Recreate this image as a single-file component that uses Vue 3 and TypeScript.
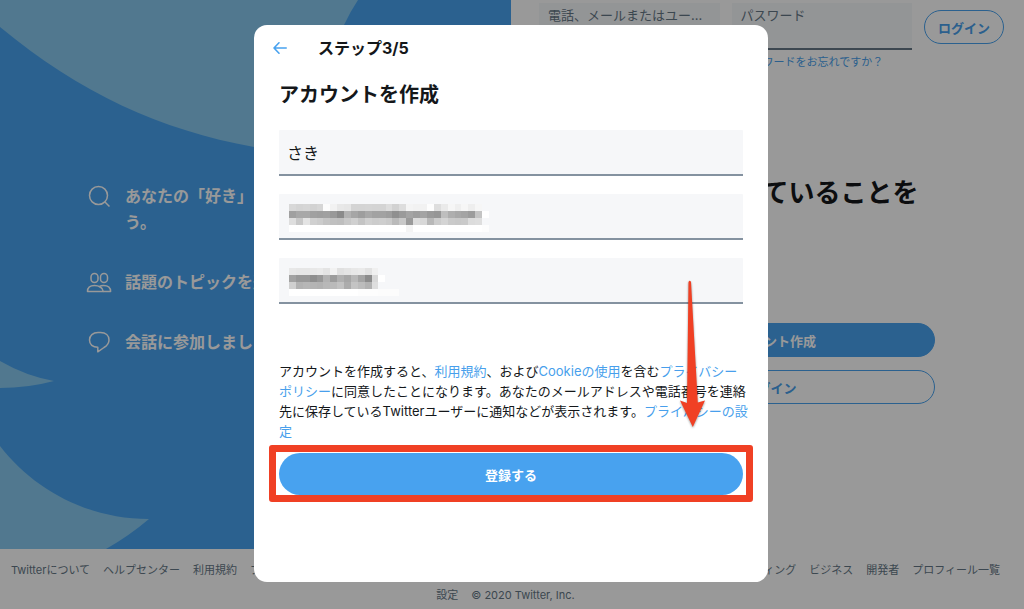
<script setup lang="ts">
import { ref } from 'vue'

interface Feature {
  icon: 'search' | 'people' | 'reply'
  text: string
}

const features: Feature[] = [
  { icon: 'search', text: 'あなたの「好き」をフォローしましょう。' },
  { icon: 'people', text: '話題のトピックを追いかけましょう。' },
  { icon: 'reply', text: '会話に参加しましょう。' },
]

const footerLinks: string[] = [
  'Twitterについて',
  'ヘルプセンター',
  '利用規約',
  'プライバシーポリシー',
  'Cookie',
  '広告情報',
  'ブログ',
  'ステータス',
  '求人',
  'ブランド',
  '広告',
  'マーケティング',
  'ビジネス',
  '開発者',
  'プロフィール一覧',
  '設定',
]

// Two hex digits per cell: the grey level of each mosaic block.
const emailMask: string[] = [
  'd8d4d6d2d6fcf2e8e6d4d4d5d4d4ddd2ddf4f2f2fddeeaf6eff6eef6',
  'a0a8a8a09ea0988ab2a69ea8a2a29e909aa49ea49a96beaea8a49cc4ff',
  'dec8e4d0ccc4c0bec8d0c4d0cccecabac89adcd8b8ccd4cac8cadcde',
  'fffffffffffffffffffffffffffffffffff4fffffffffffffffffffffd',
]
const phoneMask: string[] = [
  'e8e6e6e8eae4f2e0e4e8eae2f0',
  'a298988e98b29cb0a6b8a48cd8ff',
  'd0b2b6b4b2b8bac2acc4bcb2de',
  'fffffffffffffffffffffdfdfdfcfcfc',
]

interface Cell {
  x: number
  y: number
  fill: string
}

function toCells(rows: string[]): Cell[] {
  return rows.flatMap((row, y) =>
    (row.match(/../g) ?? []).map((v, x) => ({ x, y, fill: `#${v}${v}${v}` })),
  )
}

const emailCells = toCells(emailMask)
const phoneCells = toCells(phoneMask)

const name = ref('さき')
const email = ref('')
const phone = ref('')
const loginUser = ref('')
const loginPassword = ref('')
</script>

<template>
  <div class="page">
    <div class="columns">
      <section class="intro">
        <svg class="bird" width="511" height="549" viewBox="0 0 511 549" aria-hidden="true">
          <path d="M0 0H358Q350 12 344 25Q305 90 300 153Q276 151 254 147C160 130 80 93 0 27Z" />
          <path d="M0 361Q26 376 54 381Q28 388 0 388Z" />
          <path d="M0 446C34 490 88 519 149 519Q129 536 106 549H0Z" />
        </svg>
        <ul class="features">
          <li v-for="f in features" :key="f.icon">
            <svg v-if="f.icon === 'search'" width="26" height="26" viewBox="0 0 26 26" aria-hidden="true">
              <circle cx="12.5" cy="12.5" r="9" />
              <path d="M19 19L23.500 23.500" />
            </svg>
            <svg v-else-if="f.icon === 'people'" width="26" height="26" viewBox="0 0 26 26" aria-hidden="true">
              <rect x="5" y="4.500" width="7" height="9" rx="3.500" />
              <rect x="14.500" y="4.500" width="7" height="9" rx="3.500" />
              <path d="M1.500 22.500C1.500 18.500 4.500 16.500 8.500 16.500S17 18.500 17.300 22.500Z" />
              <path d="M13 17.800C14.200 17 15.800 16.500 17.500 16.500C21.500 16.500 24.600 18.500 24.600 22.500H17.300" />
            </svg>
            <svg v-else width="26" height="26" viewBox="0 0 26 26" aria-hidden="true">
              <path d="M12 3.500H14.500C19.700 3.500 23 6.500 23 11C23 14.500 21 16.700 18 18.500L11.800 22.800V18.300C6.800 18.300 3.500 15.500 3.500 11C3.500 6.500 7 3.500 12 3.500Z" />
            </svg>
            <span>{{ f.text }}</span>
          </li>
        </ul>
      </section>

      <section class="entry">
        <form class="login" @submit.prevent>
          <label class="login-field">
            <span>電話、メールまたはユー...</span>
            <input v-model="loginUser" type="text" />
          </label>
          <div class="password">
            <label class="login-field">
              <span>パスワード</span>
              <input v-model="loginPassword" type="password" />
            </label>
            <a href="#">パスワードをお忘れですか？</a>
          </div>
          <button class="pill outline small" type="submit">ログイン</button>
        </form>
        <div class="signup">
          <h1>「いま」起きていることを<br />見つけよう</h1>
          <p>Twitterをはじめよう</p>
          <button class="pill solid" type="button">アカウント作成</button>
          <button class="pill outline" type="button">ログイン</button>
        </div>
      </section>
    </div>

    <footer>
      <a v-for="link in footerLinks" :key="link" href="#">{{ link }}</a>
      <span>© 2020 Twitter, Inc.</span>
    </footer>

    <div class="backdrop">
      <div class="dialog" role="dialog" aria-modal="true" aria-labelledby="dialog-title">
        <header>
          <button class="back" type="button" aria-label="戻る">
            <svg width="14" height="14" viewBox="0 0 14 14" aria-hidden="true">
              <path d="M6 1.800L1 7L6 12.200M1 7H13.200" />
            </svg>
          </button>
          <h2>ステップ3/5</h2>
        </header>
        <form class="body" @submit.prevent>
          <h3 id="dialog-title">アカウントを作成</h3>
          <div class="fields">
            <div class="field">
              <input v-model="name" type="text" aria-label="名前" />
            </div>
            <div class="field">
              <input v-model="email" type="email" aria-label="メール" />
              <svg class="mask" width="200" height="28" viewBox="0 0 29 4" preserveAspectRatio="none" shape-rendering="crispEdges" aria-hidden="true">
                <rect v-for="(c, i) in emailCells" :key="i" :x="c.x" :y="c.y" width="1" height="1" :fill="c.fill" />
              </svg>
            </div>
            <div class="field">
              <input v-model="phone" type="tel" aria-label="電話" />
              <svg class="mask" width="110" height="28" viewBox="0 0 16 4" preserveAspectRatio="none" shape-rendering="crispEdges" aria-hidden="true">
                <rect v-for="(c, i) in phoneCells" :key="i" :x="c.x" :y="c.y" width="1" height="1" :fill="c.fill" />
              </svg>
            </div>
          </div>
          <p class="terms">
            アカウントを作成すると、<a href="#">利用規約</a>、および<a href="#">Cookieの使用</a>を含む<a href="#">プライバシー<br />ポリシー</a>に同意したことになります。あなたのメールアドレスや電話番号を連絡<br />先に保存しているTwitterユーザーに通知などが表示されます。<a href="#">プライバシーの設<br />定</a>
          </p>
          <div class="submit">
            <button type="submit">登録する</button>
          </div>
        </form>
        <svg class="arrow" width="34" height="156" viewBox="0 0 34 156" aria-hidden="true">
          <path d="M11.500 7Q12.800 4.500 14 7L20.800 127.500L28 125.500L15.800 152L3 125.500L10 128Z" />
        </svg>
      </div>
    </div>
  </div>
</template>

<style>
body {
  margin: 0;
  background: #fff;
}
</style>

<style scoped>
.page {
  display: flex;
  flex-direction: column;
  min-height: 100vh;
  color: #14171a;
  font-family: Inter, 'Noto Sans CJK JP', sans-serif;
  font-size: 13px;
  line-height: 20px;
}

h1,
h2,
h3,
p,
ul {
  margin: 0;
  padding: 0;
}

input,
button {
  font-family: inherit;
  box-sizing: border-box;
}

input {
  outline: none;
}

a {
  color: #489fec;
  text-decoration: none;
}

.columns {
  display: grid;
  grid-template-columns: minmax(0, 511fr) minmax(0, 513fr);
  flex: 1;
}

.intro {
  position: relative;
  overflow: hidden;
  background: #48a2ef;
}

.bird {
  position: absolute;
  top: 0;
  left: 0;
  fill: #87c8ee;
}

.features {
  position: relative;
  display: flex;
  flex-direction: column;
  gap: 34px;
  padding: 183px 0 0 86px;
  list-style: none;
}

.features li {
  display: flex;
  gap: 13px;
  color: #fff;
  font-size: 16px;
  font-weight: 700;
  line-height: 26px;
}

.features svg {
  flex: none;
  fill: none;
  stroke: #fff;
  stroke-width: 1.5;
  stroke-linejoin: round;
}

.features span {
  max-width: 280px;
}

.entry {
  display: flex;
  flex-direction: column;
}

.login {
  display: grid;
  grid-template-columns: minmax(0, 1fr) minmax(0, 1fr) 80px;
  align-items: start;
  gap: 12px;
  padding: 3px 20px 0 28px;
}

.login-field {
  display: flex;
  flex-direction: column;
  box-sizing: border-box;
  height: 47px;
  padding: 2px 9px 0;
  border-bottom: 2px solid #657786;
  background: #f5f8fa;
  color: #657786;
}

.login-field span {
  white-space: nowrap;
}

.login-field input {
  width: 100%;
  height: 20px;
  padding: 0;
  border: 0;
  background: transparent;
}

.password a {
  display: block;
  padding: 2px 9px;
  font-size: 11px;
  white-space: nowrap;
}

.pill {
  height: 34px;
  border: 1px solid #48a2ef;
  border-radius: 17px;
  font-size: 13px;
  font-weight: 700;
}

.outline {
  background: transparent;
  color: #489fec;
}

.solid {
  background: #48a2ef;
  color: #fff;
}

.small {
  margin-top: 7px;
  padding: 0;
}

.signup {
  display: flex;
  flex-direction: column;
  width: 328px;
  margin: 102px auto 0;
  padding-left: 6px;
}

.signup h1 {
  font-size: 26px;
  line-height: 34px;
  white-space: nowrap;
}

.signup p {
  margin: 40px 0 19px;
  font-weight: 700;
}

.signup .outline {
  margin-top: 13px;
}

footer {
  display: flex;
  flex-wrap: wrap;
  justify-content: center;
  padding: 9px 0 1px;
  background: #fff;
  color: #657786;
  font-size: 11px;
  line-height: 25px;
}

footer a,
footer span {
  padding-right: 13px;
  color: inherit;
}

.backdrop {
  position: fixed;
  inset: 0;
  display: flex;
  align-items: center;
  justify-content: center;
  padding: 0 2px 2px 0;
  background: rgba(0, 0, 0, 0.4);
}

.dialog {
  position: relative;
  box-sizing: border-box;
  width: 514px;
  max-width: 100%;
  border-radius: 13px;
  background: #fff;
}

.dialog header {
  display: flex;
  align-items: center;
  gap: 31px;
  height: 46px;
  padding: 0 19px;
}

.back {
  display: flex;
  padding: 0;
  border: 0;
  background: transparent;
}

.back svg {
  fill: none;
  stroke: #48a2ef;
  stroke-width: 1.6;
  stroke-linecap: round;
  stroke-linejoin: round;
}

.dialog h2 {
  font-size: 16px;
  line-height: 24px;
}

.body {
  padding: 10px 25px 87px;
}

.dialog h3 {
  font-size: 20px;
  line-height: 28px;
}

.fields {
  display: flex;
  flex-direction: column;
  gap: 18px;
  margin-top: 21px;
}

.field {
  position: relative;
  display: flex;
}

.field input {
  width: 100%;
  height: 46px;
  padding: 0 8px;
  border: 0;
  border-bottom: 2px solid #8492a0;
  border-radius: 1px 1px 0 0;
  background: #f6f7f9;
  color: #14171a;
  font-size: 16px;
}

.mask {
  position: absolute;
  top: 10px;
  left: 10px;
}

.terms {
  margin-top: 57px;
  white-space: nowrap;
}

.submit {
  position: relative;
  margin-top: 12px;
}

.submit::after {
  position: absolute;
  inset: -8px -10px -7px;
  border: 7px solid #f04024;
  border-radius: 3px;
  content: '';
  pointer-events: none;
}

.submit button {
  display: block;
  width: 100%;
  height: 42px;
  border: 0;
  border-radius: 21px;
  background: #48a2ef;
  color: #fff;
  font-size: 13px;
  font-weight: 700;
}

.arrow {
  position: absolute;
  top: 250px;
  right: 57px;
  fill: #f04024;
  filter: drop-shadow(0 1px 1px rgba(0, 0, 0, 0.4));
  pointer-events: none;
}
</style>
